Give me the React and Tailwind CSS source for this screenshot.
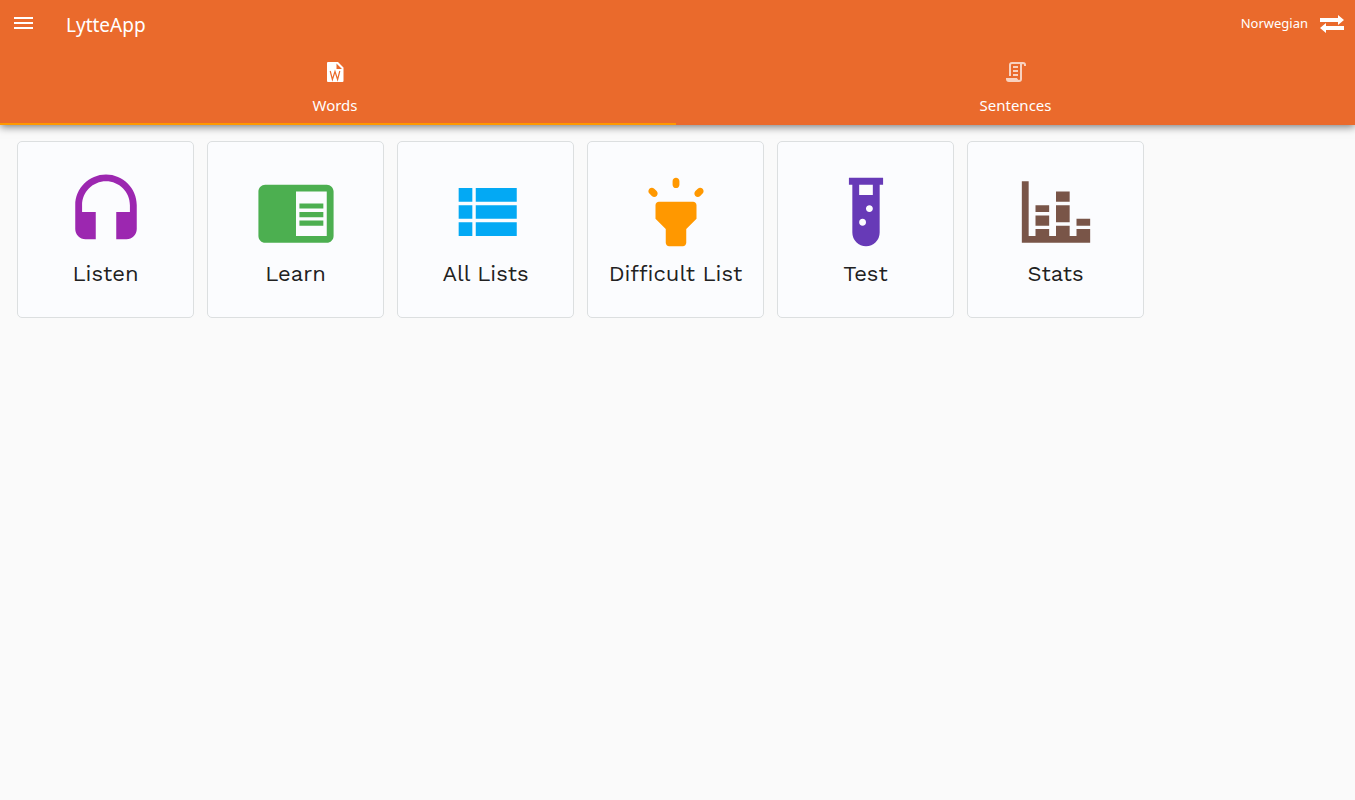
import React from 'react';

const tiles = [
  { label: 'Listen', color: 'text-[#9c27b0]', path: 'M12 1c-4.97 0-9 4.03-9 9v7c0 1.66 1.34 3 3 3h3v-8H5v-2c0-3.87 3.13-7 7-7s7 3.13 7 7v2h-4v8h3c1.66 0 3-1.34 3-3v-7c0-4.97-4.03-9-9-9z' },
  { label: 'Learn', color: 'text-[#4caf50]', path: 'M13 12h7v1.5h-7zm0-2.5h7V11h-7zm0 5h7V16h-7zM21 4H3c-1.1 0-2 .9-2 2v13c0 1.1.9 2 2 2h18c1.1 0 2-.9 2-2V6c0-1.1-.9-2-2-2zm0 15h-9V6h9v13z' },
  { label: 'All Lists', color: 'text-[#03a9f4]', path: 'M4 14h4v-4H4v4zm0 5h4v-4H4v4zM4 9h4V5H4v4zm5 5h12v-4H9v4zm0 5h12v-4H9v4zM9 5v4h12V5H9z' },
  { label: 'Difficult List', color: 'text-[#ff9800]', path: 'M6 14l3 3v4c0 .55.45 1 1 1h4c.55 0 1-.45 1-1v-4l3-3v-4c0-.55-.45-1-1-1H7c-.55 0-1 .45-1 1v4zM12 2c.55 0 1 .45 1 1v1c0 .55-.45 1-1 1s-1-.45-1-1V3c0-.55.45-1 1-1zM4.21 5.17c.39-.39 1.02-.39 1.42 0l.71.71c.39.39.39 1.02 0 1.41-.39.39-1.02.39-1.41 0l-.72-.71c-.39-.39-.39-1.02 0-1.41zM17.67 5.88l.71-.71c.39-.39 1.02-.39 1.41 0 .39.39.39 1.02 0 1.41l-.71.71c-.39.39-1.02.39-1.41 0-.39-.39-.39-1.02 0-1.41z' },
  { label: 'Test', color: 'text-[#673ab7]', path: 'M7,2V4H8V18A4,4 0 0,0 12,22A4,4 0 0,0 16,18V4H17V2H7M11,16C10.4,16 10,15.6 10,15C10,14.4 10.4,14 11,14C11.6,14 12,14.4 12,15C12,15.6 11.6,16 11,16M13,12C12.4,12 12,11.6 12,11C12,10.4 12.4,10 13,10C13.6,10 14,10.4 14,11C14,11.6 13.6,12 13,12M14,7H10V4H14V7Z' },
  { label: 'Stats', color: 'text-[#795548]', path: 'M22 21H2V3H4V19H6V17H10V19H12V16H16V19H18V17H22V21M18 14H22V16H18V14M12 6H16V9H12V6M16 15H12V10H16V15M6 10H10V12H6V10M10 16H6V13H10V16Z' },
];

function Icon({ path, className, children }) {
  return (
    <svg viewBox="0 0 24 24" fill="currentColor" fillRule="evenodd" aria-hidden="true" className={className}>
      <path d={path} />
      {children}
    </svg>
  );
}

export default function App() {
  return (
    <div className="min-h-screen bg-[#fafafa] font-['Noto_Sans',sans-serif]">
      <header className="bg-[#ea6a2c] text-white shadow-[0_2px_8px_rgba(0,0,0,0.5)]">
        <div className="flex h-12 items-center pr-[11px]">
          <button aria-label="Open menu" className="flex size-12 items-center justify-center">
            <Icon className="size-6" path="M2 5h19v2H2zM2 10h19v2H2zM2 15h19v2H2z" />
          </button>
          <h1 className="ml-[18px] pt-0.5 text-[19px]">LytteApp</h1>
          <button className="ml-auto flex items-center gap-3 text-[13px]">
            Norwegian
            <Icon className="size-6" path="M0 6h18V3l6 5-6 5v-3H0zM24 14H6v-3l-6 5 6 5v-3h18z" />
          </button>
        </div>
        <nav role="tablist" className="grid grid-cols-[676fr_679fr]">
          <button role="tab" aria-selected="true" className="flex h-[77px] flex-col items-center gap-2.5 border-b-2 border-[#ff9800] pt-3 pr-1.5 text-[15px]">
            <Icon className="size-6" path="M5 2h10l5.5 5.5V21a1 1 0 0 1-1 1H5a1 1 0 0 1-1-1V3a1 1 0 0 1 1-1zM13.5 3.5V9H19z">
              <path d="M7.2 11l2.2 8.5L12 11.5l2.6 8L16.8 11" fill="none" stroke="#ea6a2c" strokeWidth="1.2" />
            </Icon>
            Words
          </button>
          <button role="tab" aria-selected="false" className="flex h-[77px] flex-col items-center gap-2.5 border-b-2 border-transparent pt-3 text-[15px]">
            <Icon className="size-6 opacity-70" path="M15 20a1 1 0 0 0 1-1V4H8a1 1 0 0 0-1 1v11H5V5a3 3 0 0 1 3-3h11a3 3 0 0 1 3 3v1h-2V5a1 1 0 0 0-2 0v14a3 3 0 0 1-3 3H5a3 3 0 0 1-3-3v-1h11a2 2 0 0 0 2 2zM9 6h5v2H9zM9 10h5v2H9zM9 14h5v2H9z">
              <path d="M3 18.5h10l1.5 2H4z" />
            </Icon>
            Sentences
          </button>
        </nav>
      </header>
      <main className="flex flex-wrap gap-[13px] px-[17px] py-4">
        {tiles.map((tile) => (
          <button key={tile.label} className="flex size-[177px] flex-col items-center rounded-[5px] border border-[#dcdfe0] bg-[#fbfcfe] pt-[29px]">
            <Icon path={tile.path} className={`size-[82px] shrink-0 ${tile.color}`} />
            <span className="mt-1 font-['Work_Sans','Inter',sans-serif] text-[22px] leading-[34px] font-normal whitespace-nowrap text-[#212121]">{tile.label}</span>
          </button>
        ))}
      </main>
    </div>
  );
}
